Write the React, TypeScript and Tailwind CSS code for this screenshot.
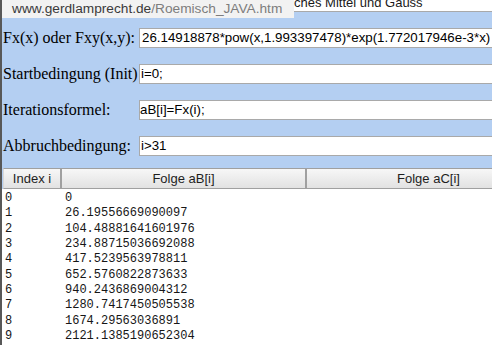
import React from "react";

const rows: [string, string][] = [
    ["0", "0"],
    ["1", "26.19556669090097"],
    ["2", "104.48881641601976"],
    ["3", "234.88715036692088"],
    ["4", "417.5239563978811"],
    ["5", "652.5760822873633"],
    ["6", "940.2436869004312"],
    ["7", "1280.7417450505538"],
    ["8", "1674.29563036891"],
    ["9", "2121.1385190652304"],
];

const fields = [
    { label: "Fx(x) oder Fxy(x,y):", value: "26.14918878*pow(x,1.993397478)*exp(1.772017946e-3*x)", pad: "pl-[2px]" },
    { label: "Startbedingung (Init)", value: "i=0;", pad: "pl-[1px]" },
    { label: "Iterationsformel:", value: "aB[i]=Fx(i);", pad: "pl-[0px]" },
    { label: "Abbruchbedingung:", value: "i>31", pad: "pl-[1px]" },
];

const Field = ({ label, value, pad }: { label: string; value: string; pad: string }) => (
    <div className="flex items-center h-[20px]">
        <label className="w-[137px] shrink-0 pl-[1px] text-[16px] leading-[20px] text-black whitespace-nowrap font-['Liberation_Serif',serif]">
            {label}
        </label>
        <div className={`w-[420px] shrink-0 h-[20px] bg-white border border-[#a9a9a9] ${pad} text-[13.3px] leading-[18px] text-black whitespace-nowrap font-['Liberation_Sans',Arial,sans-serif]`}>
            {value}
        </div>
    </div>
);

export default function App() {
    return (
        <div className="relative w-[492px] h-[345px] overflow-hidden bg-[#b4cff2] border-l-2 border-[#585858] font-['Liberation_Sans',Arial,sans-serif]">
            {/* cut-off field from above, partly hidden by the link tooltip */}
            <div className="h-[12px] bg-white border-b border-[#a9a9a9] overflow-hidden">
                <div className="pl-[292px] mt-[-4px] text-[13px] leading-[13px] text-[#1a1a1a] whitespace-nowrap">
                    ches Mittel und Gauss
                </div>
            </div>

            <div className="flex flex-col gap-[16px] pt-[16px]">
                {fields.map((f) => (
                    <Field key={f.label} {...f} />
                ))}
            </div>

            {/* result table */}
            <div className="mt-[12px] flex h-[21px] w-[560px] border-t border-b border-[#a0a0a0] border-l border-l-[#d8d8d8] ml-[1px] bg-linear-to-b from-[#f7f7f7] to-[#e2e2e2] text-[13px] leading-[19px] text-[#1e1e1e]">
                <div className="w-[58px] shrink-0 text-center border-r-2 border-[#a0a0a0]">Index i</div>
                <div className="w-[245px] shrink-0 text-center border-r-2 border-[#a0a0a0]">Folge aB[i]</div>
                <div className="w-[243px] shrink-0 text-center">Folge aC[i]</div>
            </div>
            <div className="bg-white h-[200px] pt-[2px] pl-[3px] font-['Liberation_Mono',monospace] text-[12px] leading-[15.33px] text-[#161616]">
                {rows.map(([i, v]) => (
                    <div key={i} className="flex whitespace-pre">
                        <span className="w-[60px] shrink-0">{i}</span>
                        <span>{v}</span>
                    </div>
                ))}
            </div>

            {/* status bar link tooltip */}
            <div className="absolute top-0 left-0 w-[292px] h-[18px] bg-[#f2f2f2] pl-[10px] text-[13.7px] leading-[18px] whitespace-nowrap">
                <span className="text-[#3a3a3a]">www.gerdlamprecht.de</span>
                <span className="text-[#7d7d7d]">/Roemisch_JAVA.htm</span>
            </div>
        </div>
    );
}
